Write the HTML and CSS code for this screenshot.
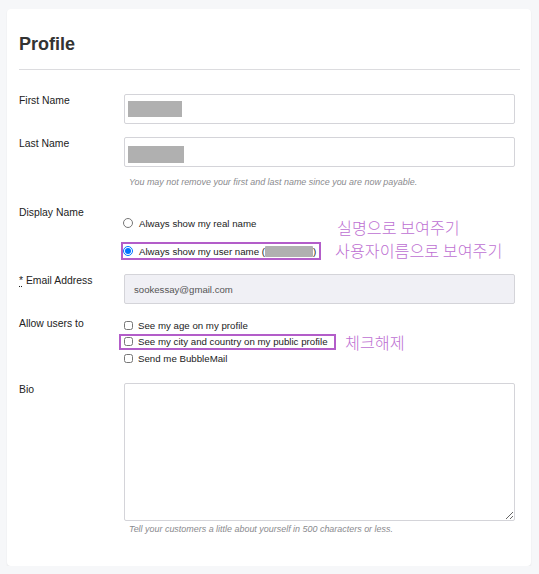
FILE: index.html
```html
<!DOCTYPE html>
<html lang="en">
<head>
<meta charset="utf-8">
<title>Profile</title>
<link rel="stylesheet" href="styles.css">
</head>
<body>
<div class="card">
  <h1 class="title">Profile</h1>
  <hr class="rule">
  <div class="form">
    <div class="row row-first">
      <div class="label">First Name</div>
      <div class="field">
        <div class="input"><span class="blur blur-first"></span></div>
      </div>
    </div>
    <div class="row row-last">
      <div class="label">Last Name</div>
      <div class="field">
        <div class="input"><span class="blur blur-last"></span></div>
        <div class="hint">You may not remove your first and last name since you are now payable.</div>
      </div>
    </div>
    <div class="row row-display">
      <div class="label">Display Name</div>
      <div class="field field-display">
        <div class="radios">
          <div class="opt-row">
            <label class="opt"><input type="radio" name="dn" class="radio"><span>Always show my real name</span></label>
          </div>
          <div class="opt-row">
            <label class="opt mark"><input type="radio" name="dn" class="radio" checked><span>Always show my user name (</span><span class="blur blur-user"></span><span>)</span></label>
          </div>
        </div>
        <div class="note note-display">
          <div class="note-line1">실명으로 보여주기</div>
          <div>사용자이름으로 보여주기</div>
        </div>
      </div>
    </div>
    <div class="row row-email">
      <div class="label"><abbr class="req" title="required">*</abbr> Email Address</div>
      <div class="field">
        <div class="input input-disabled">sookessay@gmail.com</div>
      </div>
    </div>
    <div class="row row-allow">
      <div class="label">Allow users to</div>
      <div class="field field-allow">
        <div class="checks">
          <div class="chk-row"><label class="chk"><input type="checkbox" class="box"><span>See my age on my profile</span></label></div>
          <div class="chk-row"><label class="chk mark mark-chk"><input type="checkbox" class="box"><span>See my city and country on my public profile</span></label></div>
          <div class="chk-row"><label class="chk"><input type="checkbox" class="box"><span>Send me BubbleMail</span></label></div>
        </div>
        <div class="note note-allow">체크해제</div>
      </div>
    </div>
    <div class="row row-bio">
      <div class="label">Bio</div>
      <div class="field">
        <textarea class="textarea"></textarea>
        <div class="hint hint-bio">Tell your customers a little about yourself in 500 characters or less.</div>
      </div>
    </div>
  </div>
</div>
</body>
</html>
```
FILE: styles.css
```css
html, body {
  margin: 0;
  padding: 0;
}
body {
  background: #f6f7f9;
  font-family: "Liberation Sans", Arial, sans-serif;
  color: #222;
}
.card {
  box-sizing: border-box;
  width: 524px;
  height: 557px;
  margin: 9px 0 0 7px;
  padding: 24px 11px 0 12px;
  background: #fff;
  border-radius: 4px;
  box-shadow: 0 1px 2px rgba(0, 0, 0, 0.07);
}
.title {
  margin: 0;
  font-size: 18px;
  line-height: 22px;
  font-weight: 700;
  color: #333;
}
.rule {
  margin: 14px 0 0;
  border: 0;
  border-top: 1px solid #dcdcdf;
  height: 0;
}
.form {
  padding-top: 24px;
}
.row {
  display: grid;
  grid-template-columns: 105px 391px;
}
.label {
  font-size: 10.4px;
  line-height: 13px;
  color: #222;
}
.req {
  text-decoration: underline dotted;
  text-underline-offset: 2px;
}
.input {
  box-sizing: border-box;
  width: 391px;
  height: 30px;
  border: 1px solid #d4d4d9;
  border-radius: 2px;
  background: #fff;
  display: flex;
  align-items: center;
  padding: 0 3px;
}
.blur {
  display: inline-block;
  background: #b0b0b0;
}
.blur-first {
  width: 54px;
  height: 16px;
}
.blur-last {
  width: 56px;
  height: 17px;
  margin-top: 4px;
}
.blur-user {
  width: 48px;
  height: 11px;
  border-radius: 1px;
}
.row-last {
  margin-top: 13px;
}
.hint {
  margin-top: 9px;
  padding-left: 5px;
  font-size: 8.95px;
  line-height: 12px;
  font-style: italic;
  color: #8a8a8e;
}
.row-display {
  margin-top: 18px;
}
.field-display {
  display: flex;
  padding-top: 10px;
}
.radios {
  width: 211px;
}
.opt-row {
  height: 14px;
  display: flex;
  align-items: center;
  margin-left: -1px;
}
.opt-row + .opt-row {
  margin-top: 14px;
}
.opt, .chk {
  display: inline-flex;
  align-items: center;
  font-size: 9.7px;
  color: #222;
  white-space: nowrap;
}
.opt {
  height: 14px;
}
.radio {
  width: 10px;
  height: 10px;
  margin: 0 6px 0 0;
}
.mark {
  outline: 2px solid #b35dc9;
  outline-offset: 0;
}
.opt.mark {
  padding-right: 3px;
}
.note {
  font-family: "Noto Sans CJK KR", "Noto Sans", sans-serif;
  font-size: 16.2px;
  font-weight: 300;
  color: #bd6fd2;
  line-height: 23px;
}
.note-line1 {
  padding-left: 2px;
}
.row-email {
  margin-top: 12px;
}
.input-disabled {
  background: #f0f0f5;
  padding-left: 9px;
  font-size: 9.6px;
  color: #555;
}
.row-allow {
  margin-top: 13px;
}
.field-allow {
  display: flex;
}
.checks {
  width: 221px;
}
.chk-row {
  height: 16.5px;
  display: flex;
  align-items: center;
}
.chk {
  height: 12px;
}
.box {
  width: 9px;
  height: 9px;
  margin: 0 5px 0 0;
}
.mark-chk {
  margin-left: -3px;
  padding: 0 6px 0 3px;
}
.note-allow {
  margin-top: 16px;
  line-height: 18px;
}
.row-bio {
  margin-top: 16px;
}
.textarea {
  display: block;
  box-sizing: border-box;
  width: 391px;
  height: 138px;
  margin: 0;
  border: 1px solid #d4d4d9;
  border-radius: 2px;
  background: #fff;
  font-family: inherit;
}
.hint-bio {
  margin-top: 2px;
}
```
